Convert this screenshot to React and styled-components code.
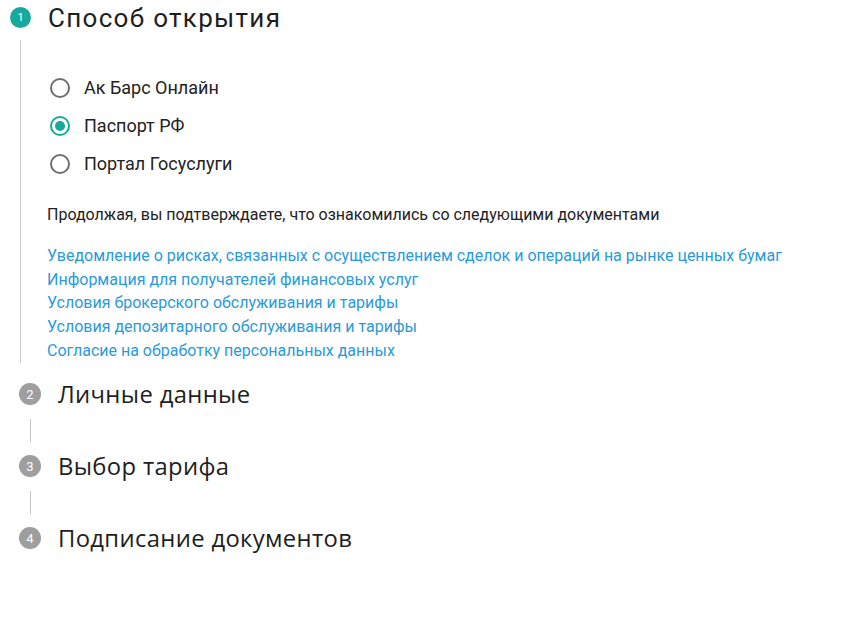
import React from "react";
import styled, { createGlobalStyle } from "styled-components";

const Global = createGlobalStyle`
  html, body { margin: 0; padding: 0; background: #fff; }
  body { font-family: Roboto, "Noto Sans", sans-serif; color: #212121; }
`;

const Page = styled.div`
  width: 854px;
  height: 619px;
  overflow: hidden;
  position: relative;
`;

const Stepper = styled.div`
  display: flex;
  flex-direction: column;
`;

const StepHeader = styled.div`
  display: flex;
  align-items: center;
  gap: ${(p) => p.$gap}px;
  padding-left: ${(p) => p.$indent}px;
  height: ${(p) => p.$h}px;
`;

const StepBadge = styled.div`
  width: ${(p) => (p.$active ? 21 : 22)}px;
  height: ${(p) => (p.$active ? 21 : 22)}px;
  border-radius: 50%;
  background: ${(p) => (p.$active ? "#17aa9c" : "#9e9e9e")};
  color: #fff;
  font-family: Roboto, sans-serif;
  font-size: ${(p) => (p.$active ? 11 : 13)}px;
  display: flex;
  align-items: center;
  justify-content: center;
  flex-shrink: 0;
`;

const StepTitle = styled.div`
  font-family: ${(p) => (p.$active ? 'Roboto, sans-serif' : '"Open Sans", sans-serif')};
  font-size: ${(p) => (p.$active ? 26 : 23.8)}px;
  color: #1e1e1e;
  letter-spacing: ${(p) => (p.$active ? "1.3px" : "0.35px")};
`;

const StepBody = styled.div`
  margin-left: 20px;
  border-left: 1px solid #c8c8c8;
  padding: 35px 0 0 26px;
  margin-top: 5px;
  margin-bottom: 9px;
`;

const RadioGroup = styled.div`
  display: flex;
  flex-direction: column;
  gap: 13px;
`;

const RadioRow = styled.label`
  display: flex;
  align-items: center;
  gap: 14px;
  height: 25px;
  padding-left: 3px;
  font-size: 18px;
  color: #222;
`;

const RadioMark = styled.span`
  width: 20px;
  height: 20px;
  box-sizing: border-box;
  border-radius: 50%;
  border: 2px solid ${(p) => (p.$checked ? "#17aa9c" : "#6f6f6f")};
  display: flex;
  align-items: center;
  justify-content: center;
  &::after {
    content: "";
    width: 10px;
    height: 10px;
    border-radius: 50%;
    background: #17aa9c;
    display: ${(p) => (p.$checked ? "block" : "none")};
  }
`;

const Note = styled.div`
  margin-top: 29px;
  font-size: 16px;
  line-height: 19px;
  color: #222;
`;

const Links = styled.div`
  margin-top: 20px;
  display: flex;
  flex-direction: column;
`;

const DocLink = styled.a`
  font-size: 16px;
  line-height: 23.7px;
  color: #2b9ad9;
  text-decoration: none;
`;

const Connector = styled.div`
  margin-left: 30px;
  width: 1px;
  height: 23px;
  background: #c8c8c8;
  margin-top: 2px;
  margin-bottom: 2px;
`;

const options = ["Ак Барс Онлайн", "Паспорт РФ", "Портал Госуслуги"];
const docs = [
  "Уведомление о рисках, связанных с осуществлением сделок и операций на рынке ценных бумаг",
  "Информация для получателей финансовых услуг",
  "Условия брокерского обслуживания и тарифы",
  "Условия депозитарного обслуживания и тарифы",
  "Согласие на обработку персональных данных",
];
const steps = ["Личные данные", "Выбор тарифа", "Подписание документов"];

export default function App() {
  return (
    <Page>
      <Global />
      <Stepper>
        <StepHeader $indent={10} $h={35} $gap={17}>
          <StepBadge $active>1</StepBadge>
          <StepTitle $active>Способ открытия</StepTitle>
        </StepHeader>
        <StepBody>
          <RadioGroup>
            {options.map((o, i) => (
              <RadioRow key={o}>
                <RadioMark $checked={i === 1} />
                {o}
              </RadioRow>
            ))}
          </RadioGroup>
          <Note>Продолжая, вы подтверждаете, что ознакомились со следующими документами</Note>
          <Links>
            {docs.map((d) => (
              <DocLink key={d} href="#">
                {d}
              </DocLink>
            ))}
          </Links>
        </StepBody>
        {steps.map((s, i) => (
          <React.Fragment key={s}>
            {i > 0 && <Connector />}
            <StepHeader $indent={19} $h={45} $gap={17}>
              <StepBadge>{i + 2}</StepBadge>
              <StepTitle>{s}</StepTitle>
            </StepHeader>
          </React.Fragment>
        ))}
      </Stepper>
    </Page>
  );
}
